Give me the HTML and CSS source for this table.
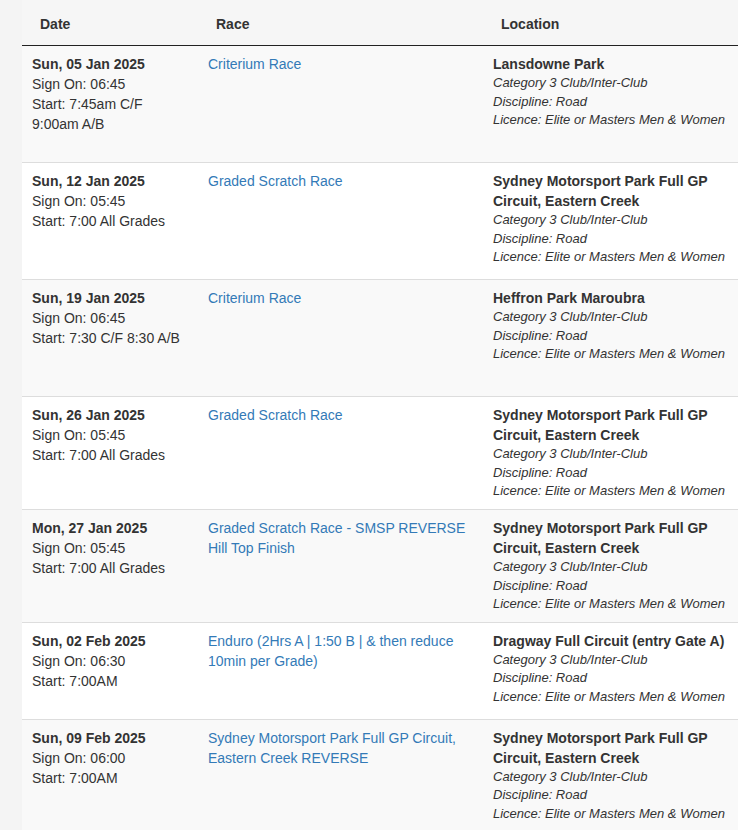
FILE: index.html
```html
<!DOCTYPE html>
<html>
<head>
<meta charset="utf-8">
<link rel="stylesheet" href="styles.css">
</head>
<body>
<div class="page">
  <div class="table">
    <div class="row head">
      <div class="th">Date</div>
      <div class="th">Race</div>
      <div class="th">Location</div>
    </div>

    <div class="row odd h116">
      <div class="cell"><div class="date">Sun, 05 Jan 2025</div><div>Sign On: 06:45</div><div>Start: 7:45am C/F<br>9:00am A/B</div></div>
      <div class="cell"><a href="#">Criterium Race</a></div>
      <div class="cell"><div class="loc">Lansdowne Park</div><div class="meta">Category 3 Club/Inter-Club</div><div class="meta">Discipline: Road</div><div class="meta">Licence: Elite or Masters Men &amp; Women</div></div>
    </div>

    <div class="row h117">
      <div class="cell"><div class="date">Sun, 12 Jan 2025</div><div>Sign On: 05:45</div><div>Start: 7:00 All Grades</div></div>
      <div class="cell"><a href="#">Graded Scratch Race</a></div>
      <div class="cell"><div class="loc">Sydney Motorsport Park Full GP Circuit, Eastern Creek</div><div class="meta">Category 3 Club/Inter-Club</div><div class="meta">Discipline: Road</div><div class="meta">Licence: Elite or Masters Men &amp; Women</div></div>
    </div>

    <div class="row odd h117">
      <div class="cell"><div class="date">Sun, 19 Jan 2025</div><div>Sign On: 06:45</div><div>Start: 7:30 C/F 8:30 A/B</div></div>
      <div class="cell"><a href="#">Criterium Race</a></div>
      <div class="cell"><div class="loc">Heffron Park Maroubra</div><div class="meta">Category 3 Club/Inter-Club</div><div class="meta">Discipline: Road</div><div class="meta">Licence: Elite or Masters Men &amp; Women</div></div>
    </div>

    <div class="row h113">
      <div class="cell"><div class="date">Sun, 26 Jan 2025</div><div>Sign On: 05:45</div><div>Start: 7:00 All Grades</div></div>
      <div class="cell"><a href="#">Graded Scratch Race</a></div>
      <div class="cell"><div class="loc">Sydney Motorsport Park Full GP Circuit, Eastern Creek</div><div class="meta">Category 3 Club/Inter-Club</div><div class="meta">Discipline: Road</div><div class="meta">Licence: Elite or Masters Men &amp; Women</div></div>
    </div>

    <div class="row odd h111">
      <div class="cell"><div class="date">Mon, 27 Jan 2025</div><div>Sign On: 05:45</div><div>Start: 7:00 All Grades</div></div>
      <div class="cell"><a href="#">Graded Scratch Race - SMSP REVERSE Hill Top Finish</a></div>
      <div class="cell"><div class="loc">Sydney Motorsport Park Full GP Circuit, Eastern Creek</div><div class="meta">Category 3 Club/Inter-Club</div><div class="meta">Discipline: Road</div><div class="meta">Licence: Elite or Masters Men &amp; Women</div></div>
    </div>

    <div class="row h97">
      <div class="cell"><div class="date">Sun, 02 Feb 2025</div><div>Sign On: 06:30</div><div>Start: 7:00AM</div></div>
      <div class="cell"><a href="#">Enduro (2Hrs A | 1:50 B | &amp; then reduce 10min per Grade)</a></div>
      <div class="cell"><div class="loc">Dragway Full Circuit (entry Gate A)</div><div class="meta">Category 3 Club/Inter-Club</div><div class="meta">Discipline: Road</div><div class="meta">Licence: Elite or Masters Men &amp; Women</div></div>
    </div>

    <div class="row odd h117">
      <div class="cell"><div class="date">Sun, 09 Feb 2025</div><div>Sign On: 06:00</div><div>Start: 7:00AM</div></div>
      <div class="cell"><a href="#">Sydney Motorsport Park Full GP Circuit, Eastern Creek REVERSE</a></div>
      <div class="cell"><div class="loc">Sydney Motorsport Park Full GP Circuit, Eastern Creek</div><div class="meta">Category 3 Club/Inter-Club</div><div class="meta">Discipline: Road</div><div class="meta">Licence: Elite or Masters Men &amp; Women</div></div>
    </div>
  </div>
</div>
</body>
</html>
```

FILE: styles.css
```css
html, body {
  margin: 0;
  padding: 0;
  background: #f4f4f4;
}
body {
  font-family: "Liberation Sans", Arial, sans-serif;
  font-size: 14px;
  line-height: 20px;
  color: #333;
  overflow: hidden;
}
.page {
  padding-left: 22px;
}
.table {
  width: 100%;
}
.row {
  display: grid;
  grid-template-columns: 176px 285px 1fr;
  box-sizing: border-box;
  border-top: 1px solid #ddd;
  background: #fff;
}
.row.odd {
  background: #f9f9f9;
}
.row.head {
  background: #f6f6f6;
  border-top: none;
  border-bottom: 1px solid #222;
}
.row.head + .row {
  border-top: none;
}
.th {
  font-weight: bold;
  padding: 14px 10px 11px 18px;
}
.cell {
  padding: 8px 10px;
}
.row .cell:last-child {
  padding-right: 0;
}
.date, .loc {
  font-weight: bold;
}
.meta {
  font-style: italic;
  font-size: 13px;
  line-height: 18.6px;
}
a {
  color: #337ab7;
  text-decoration: none;
}
.h116 { min-height: 116px; }
.h117 { min-height: 117px; }
.h113 { min-height: 113px; }
.h111 { min-height: 111px; }
.h97 { min-height: 97px; }
```
